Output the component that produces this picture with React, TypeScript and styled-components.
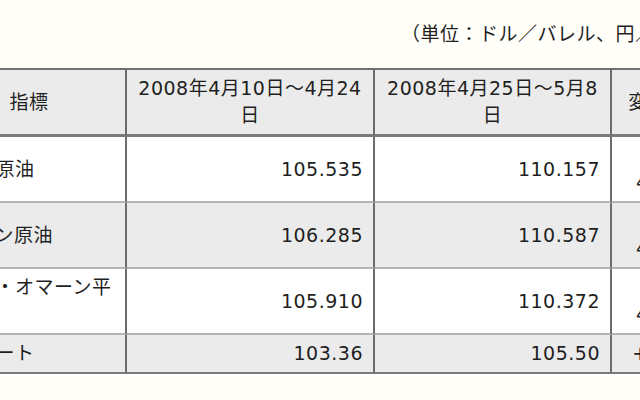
import React from "react";
import styled, { createGlobalStyle } from "styled-components";

const GlobalStyle = createGlobalStyle`
  html, body {
    margin: 0;
    padding: 0;
    background: #fffef9;
    overflow: hidden;
  }
  body {
    font-family: "DejaVu Sans", "Noto Sans CJK JP", sans-serif;
    color: #1f1f1f;
  }
`;

const Page = styled.div`
  width: 780px;
  margin-left: -67px;
  padding-top: 21px;
  font-size: 19px;
  line-height: 27px;
  letter-spacing: 0.5px;
`;

const Unit = styled.p`
  margin: 0 0 20px;
  text-align: right;
  white-space: nowrap;
`;

const Table = styled.table`
  width: 772px;
  table-layout: fixed;
  border-collapse: separate;
  border-spacing: 0;
  border-top: 2px solid #707070;
`;

const HeadCell = styled.th<{ $width: number; $first?: boolean }>`
  box-sizing: border-box;
  width: ${(p) => p.$width}px;
  padding: 5px ${(p) => (p.$first ? "4px" : "10px")};
  background: #ebebeb;
  font-weight: normal;
  text-align: center;
  vertical-align: middle;
  border-right: 2px solid #6c6c6c;
  border-bottom: 3px solid #7c7c7c;
`;

const Row = styled.tr<{ $shade: boolean }>`
  background: ${(p) => (p.$shade ? "#ebebeb" : "#ffffff")};

  &:last-child > td {
    border-bottom-color: #7a7a7a;
  }
`;

const Cell = styled.td<{ $align: "left" | "right"; $first?: boolean }>`
  box-sizing: border-box;
  padding: 5px ${(p) => (p.$first ? "4px" : "10px")};
  text-align: ${(p) => p.$align};
  vertical-align: middle;
  border-right: 2px solid #6c6c6c;
  border-bottom: 2px solid #b4b4b4;
`;

const Line = styled.span`
  display: block;
`;

type Item = { name: string; from: string; to: string; diff: string[] };

const rows: Item[] = [
  { name: "ドバイ原油", from: "105.535", to: "110.157", diff: ["上昇", "4.622"] },
  { name: "オマーン原油", from: "106.285", to: "110.587", diff: ["上昇", "4.302"] },
  { name: "ドバイ・オマーン平均", from: "105.910", to: "110.372", diff: ["上昇", "4.462"] },
  { name: "為替レート", from: "103.36", to: "105.50", diff: ["+2.14"] },
];

export default function App() {
  return (
    <>
      <GlobalStyle />
      <Page>
        <Unit>（単位：ドル／バレル、円／ドル）</Unit>
        <Table>
          <thead>
            <tr>
              <HeadCell $width={194} $first>
                指標
              </HeadCell>
              <HeadCell $width={248}>2008年4月10日～4月24日</HeadCell>
              <HeadCell $width={237}>2008年4月25日～5月8日</HeadCell>
              <HeadCell $width={93}>変化幅</HeadCell>
            </tr>
          </thead>
          <tbody>
            {rows.map((r, i) => (
              <Row key={r.name} $shade={i % 2 === 1}>
                <Cell $align="left" $first>
                  {r.name}
                </Cell>
                <Cell $align="right">{r.from}</Cell>
                <Cell $align="right">{r.to}</Cell>
                <Cell $align="right">
                  {r.diff.map((d) => (
                    <Line key={d}>{d}</Line>
                  ))}
                </Cell>
              </Row>
            ))}
          </tbody>
        </Table>
      </Page>
    </>
  );
}
